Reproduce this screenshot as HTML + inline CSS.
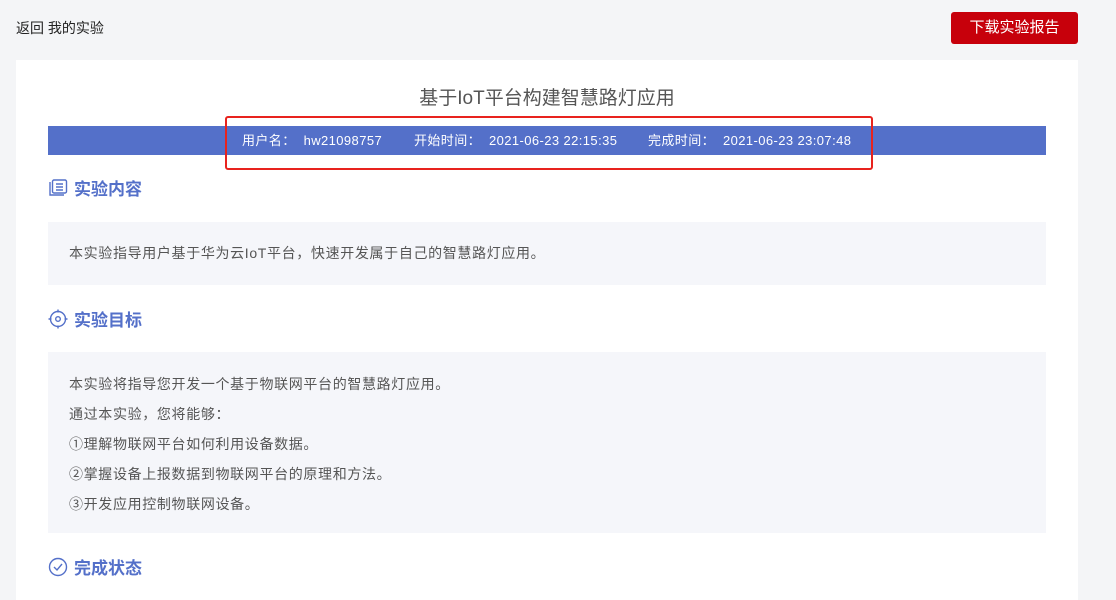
<!DOCTYPE html>
<html><head><meta charset="utf-8"><style>
body{margin:0;width:1116px;height:594px;background:#f4f5f7;font-family:"Liberation Sans","Noto Sans CJK SC",sans-serif;overflow:hidden;position:relative}
.a{position:absolute}
.back{left:16px;top:18px;font-size:14px;color:#222}
.btn{left:951px;top:12px;width:127px;height:32px;background:#c7000b;border-radius:3px;color:#fff;font-size:15px;line-height:32px;text-align:center}
.card{left:16px;top:60px;width:1062px;height:540px;background:#fff}
.title{left:0;width:1094px;top:83px;text-align:center;font-size:19px;color:#555}
.bar{left:48px;top:126px;width:998px;height:29px;background:#5470c9;color:#fff;font-size:13px;line-height:29px}
.bar span{letter-spacing:0.4px}
.red{left:225px;top:116px;width:644px;height:50px;border:2px solid #e8231e;border-radius:3px}
.h{left:48px;font-size:17px;font-weight:bold;color:#5470c9;display:flex;align-items:center;gap:6px}
.box{left:48px;width:998px;background:#f5f6fa;color:#555;font-size:14px;letter-spacing:0.65px}
.box p{margin:0;padding-left:21px}
</style></head><body>
<div class="a back">返回 我的实验</div>
<div class="a btn">下载实验报告</div>
<div class="a card"></div>
<div class="a title">基于IoT平台构建智慧路灯应用</div>
<div class="a bar"><span class="a" style="left:194px">用户名：&nbsp;&nbsp;hw21098757</span><span class="a" style="left:366px">开始时间：&nbsp;&nbsp;2021-06-23 22:15:35</span><span class="a" style="left:600px">完成时间：&nbsp;&nbsp;2021-06-23 23:07:48</span></div>
<div class="a red"></div>
<div class="a h" style="top:175px"><svg width="20" height="20" viewBox="0 0 20 20" fill="none" stroke="#5470c9" stroke-width="1.4"><path d="M2 4v13h14"/><rect x="4.5" y="2" width="14" height="13" rx="1.5"/><path d="M8 6h7M8 9h7M8 12h7"/></svg>实验内容</div>
<div class="a box" style="top:222px;height:63px;line-height:63px"><p>本实验指导用户基于华为云IoT平台，快速开发属于自己的智慧路灯应用。</p></div>
<div class="a h" style="top:306px"><svg width="20" height="20" viewBox="0 0 20 20" fill="none" stroke="#5470c9" stroke-width="1.4"><circle cx="10" cy="10" r="7.5"/><circle cx="10" cy="10" r="2.3"/><path d="M10 0.5v3M10 16.5v3M0.5 10h3M16.5 10h3"/></svg>实验目标</div>
<div class="a box" style="top:352px;height:181px;padding-top:17px;box-sizing:border-box;line-height:30px"><p>本实验将指导您开发一个基于物联网平台的智慧路灯应用。</p><p>通过本实验，您将能够：</p><p>①理解物联网平台如何利用设备数据。</p><p>②掌握设备上报数据到物联网平台的原理和方法。</p><p>③开发应用控制物联网设备。</p></div>
<div class="a h" style="top:554px"><svg width="20" height="20" viewBox="0 0 20 20" fill="none" stroke="#5470c9" stroke-width="1.4"><circle cx="10" cy="10" r="8.5"/><path d="M6 10l3 3 5-6"/></svg>完成状态</div>
</body></html>
